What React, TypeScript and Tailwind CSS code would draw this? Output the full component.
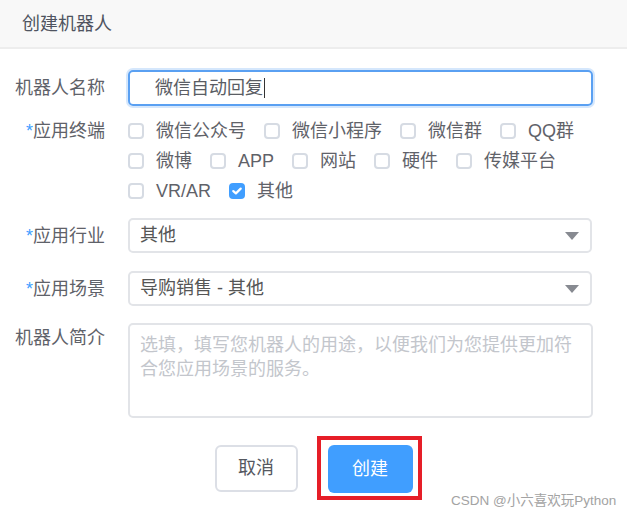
import React from "react";

const FONT = '"Liberation Sans", "Noto Sans CJK SC", sans-serif';

function Box({ checked = false }: { checked?: boolean }) {
  if (checked) {
    return (
      <span className="flex h-[16px] w-[16px] shrink-0 items-center justify-center rounded-[4px] bg-[#409eff]">
        <svg width="10" height="8" viewBox="0 0 10 8">
          <path d="M1.3 4.1 L3.9 6.4 L8.7 1.6" fill="none" stroke="#fff" strokeWidth="2.2" strokeLinecap="round" strokeLinejoin="round" />
        </svg>
      </span>
    );
  }
  return <span className="block h-[16px] w-[16px] shrink-0 rounded-[4px] border-2 border-[#d6dbe3] bg-white" />;
}

function Item({ label, checked }: { label: string; checked?: boolean }) {
  return (
    <div className="mr-[18px] flex items-center gap-[12px]">
      <Box checked={checked} />
      <span>{label}</span>
    </div>
  );
}

function Label({ text, req }: { text: string; req?: boolean }) {
  return (
    <div className="w-[128px] shrink-0 pr-[23px] text-right leading-[30px] text-[#5f6269]">
      {req && <span className="text-[#409eff]">*</span>}
      {text}
    </div>
  );
}

function Arrow() {
  return (
    <svg width="14" height="8" viewBox="0 0 14 8" className="shrink-0">
      <path d="M0 0 H14 L7 8 Z" fill="#878a91" />
    </svg>
  );
}

export default function App() {
  return (
    <div className="relative h-[516px] w-[627px] overflow-hidden bg-white text-[18px]" style={{ fontFamily: FONT }}>
      <div className="flex h-[49px] items-center border-b-2 border-[#ededed] bg-[#f8f8f8] pl-[22px] pt-[1px] text-[#4f5460]">
        创建机器人
      </div>

      <div className="pt-[21px]">
        <div className="flex items-center">
          <Label text="机器人名称" />
          <div className="flex h-[36px] w-[465px] items-center rounded-[5px] border-2 border-[#5aa0f2] pl-[25px] text-[#5a5d64] shadow-[0_0_0_2px_#d5e7fc]">
            微信自动回复
            <span className="ml-[1px] inline-block h-[20px] w-[1px] bg-[#333]" />
          </div>
        </div>

        <div className="mt-[10px] flex items-start">
          <Label text="应用终端" req />
          <div className="flex flex-col text-[#5f6269]">
            <div className="flex h-[30px] items-center">
              <Item label="微信公众号" />
              <Item label="微信小程序" />
              <Item label="微信群" />
              <Item label="QQ群" />
            </div>
            <div className="flex h-[30px] items-center">
              <Item label="微博" />
              <Item label="APP" />
              <Item label="网站" />
              <Item label="硬件" />
              <Item label="传媒平台" />
            </div>
            <div className="flex h-[30px] items-center">
              <Item label="VR/AR" />
              <Item label="其他" checked />
            </div>
          </div>
        </div>

        <div className="mt-[12px] flex items-center">
          <Label text="应用行业" req />
          <div className="flex h-[35px] w-[464px] items-center justify-between rounded-[5px] border-2 border-[#e2e4e8] pl-[10px] pr-[11px] text-[#555]">
            <span>其他</span>
            <Arrow />
          </div>
        </div>

        <div className="mt-[18px] flex items-center">
          <Label text="应用场景" req />
          <div className="flex h-[35px] w-[464px] items-center justify-between rounded-[5px] border-2 border-[#e2e4e8] pl-[10px] pr-[11px] text-[#555]">
            <span>导购销售 - 其他</span>
            <Arrow />
          </div>
        </div>

        <div className="mt-[17px] flex items-start">
          <Label text="机器人简介" />
          <div className="h-[95px] w-[465px] rounded-[5px] border-2 border-[#e2e4e8] pl-[10px] pr-[8px] pt-[8px] leading-[24px] text-[#c3c6cc]">
            选填，填写您机器人的用途，以便我们为您提供更加符合您应用场景的服务。
          </div>
        </div>

        <div className="mt-[27px] flex justify-center gap-[30px]">
          <button className="h-[47px] w-[83px] rounded-[6px] border-2 border-[#dcdfe6] bg-white text-[#55585f]">
            取消
          </button>
          <div className="relative">
            <button className="h-[48px] w-[85px] rounded-[6px] bg-[#409eff] text-white">创建</button>
            <div className="pointer-events-none absolute left-[-11px] top-[-9px] h-[64px] w-[105px] border-[4px] border-[#e61e28]" />
          </div>
        </div>
      </div>

      <div className="absolute left-[451px] top-[492px] text-[13.5px] leading-[18px] text-[#a3a3a3]">
        CSDN @小六喜欢玩Python
      </div>
    </div>
  );
}
